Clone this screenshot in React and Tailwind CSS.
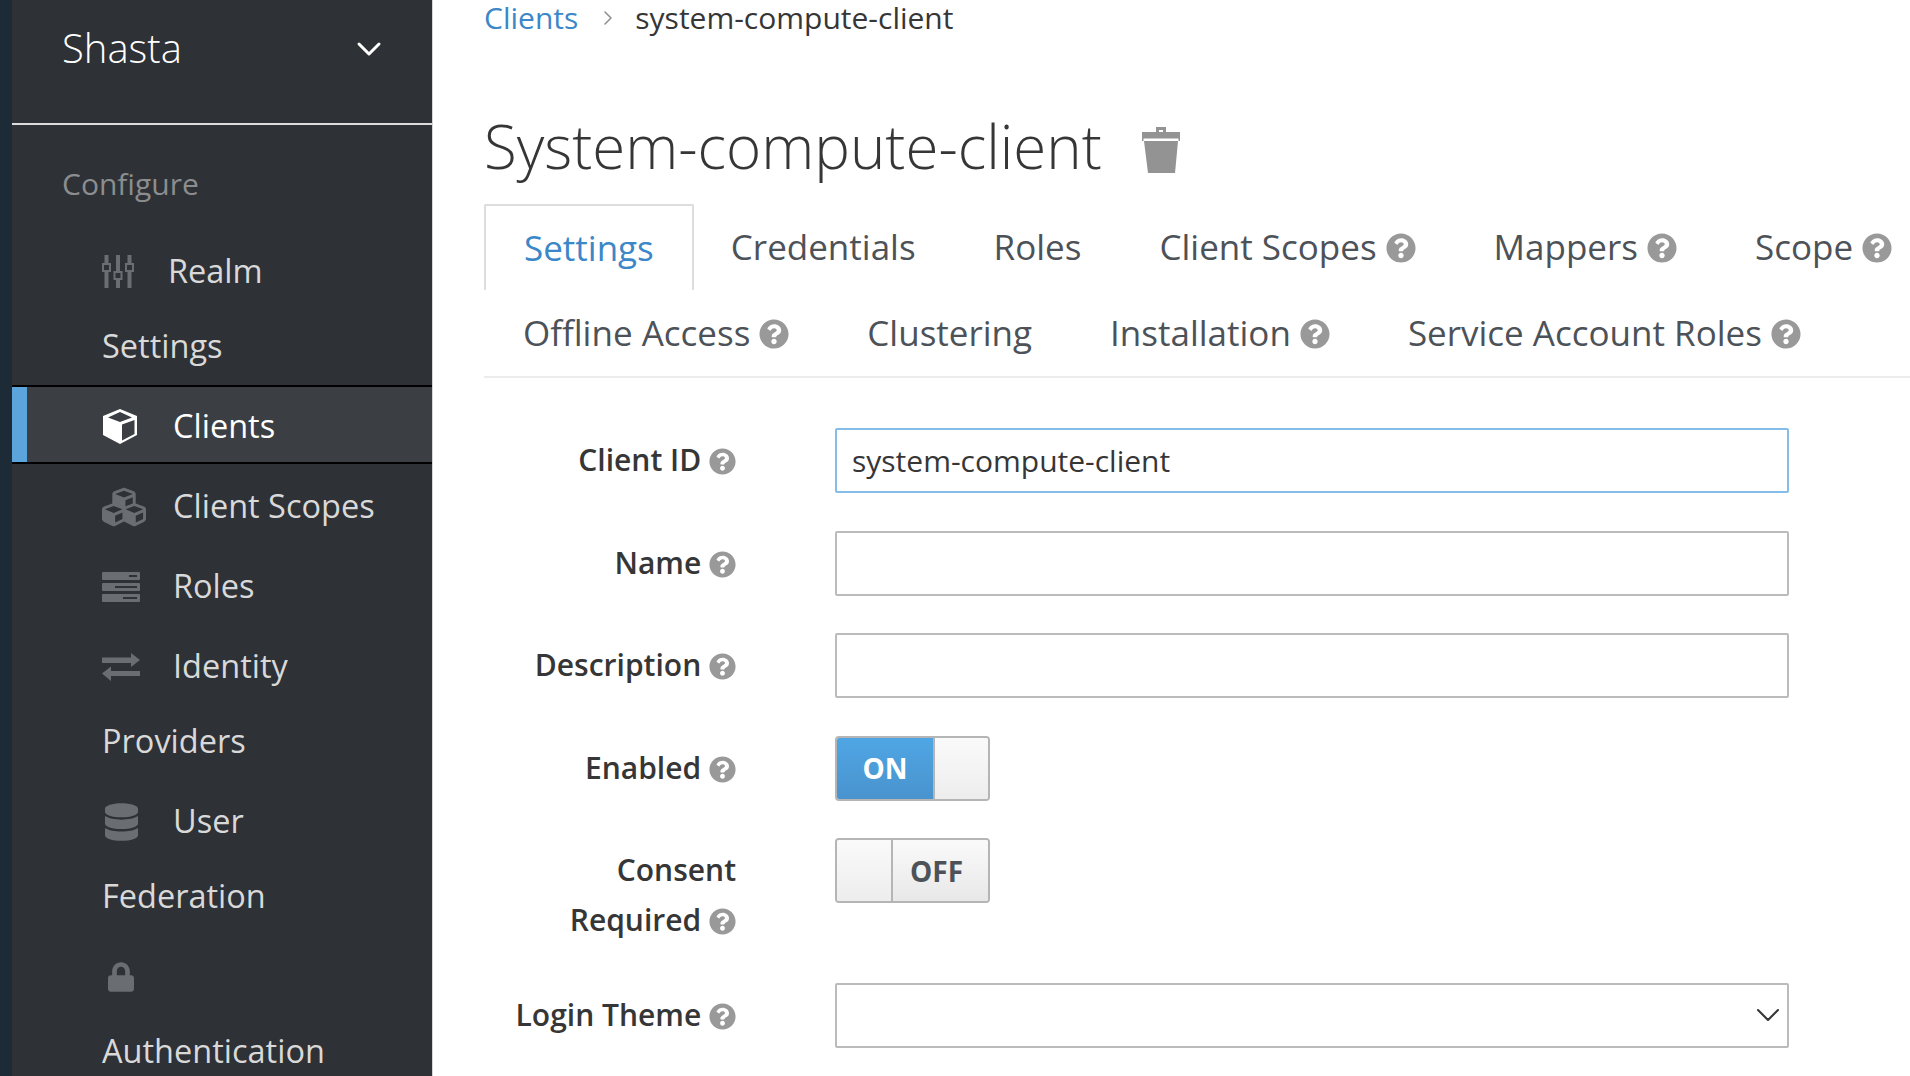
import React from 'react'
import { FaCubes, FaDatabase, FaLock, FaQuestionCircle } from 'react-icons/fa'
import { ChevronDown, ChevronRight } from 'lucide-react'

function SlidersIcon() {
  return (
    <svg viewBox="0 0 32 33" className="w-[32px] h-[33px]" fill="currentColor">
      <rect x="2.500" y="0" width="4" height="9" />
      <rect x="2.500" y="16" width="4" height="17" />
      <rect x="1" y="9" width="7" height="7" fill="none" stroke="currentColor" strokeWidth="2" />
      <rect x="14" y="0" width="4" height="17" />
      <rect x="14" y="24" width="4" height="9" />
      <rect x="12.500" y="17" width="7" height="7" fill="none" stroke="currentColor" strokeWidth="2" />
      <rect x="25.500" y="0" width="4" height="9" />
      <rect x="25.500" y="16" width="4" height="17" />
      <rect x="24" y="9" width="7" height="7" fill="none" stroke="currentColor" strokeWidth="2" />
    </svg>
  )
}

function CubeIcon() {
  return (
    <svg viewBox="0 0 36 36" className="w-[36px] h-[36px]" fill="#ffffff">
      <path
        fillRule="evenodd"
        d="M18 0L35 7V26L18 35L1 26V7ZM18 3L6 8.500L18 13L30 8.500ZM20 15.500V31.500L32.500 25V11Z"
      />
    </svg>
  )
}

function ServerIcon() {
  return (
    <svg viewBox="0 0 38 30" className="w-[38px] h-[30px]" fill="currentColor">
      <rect x="0" y="0" width="38" height="8" rx="1" />
      <rect x="0" y="11" width="38" height="8" rx="1" />
      <rect x="0" y="22" width="38" height="8" rx="1" />
      <rect x="27" y="3" width="8" height="2" fill="#2e3136" />
      <rect x="13" y="14" width="22" height="2" fill="#2e3136" />
      <rect x="21" y="25" width="14" height="2" fill="#2e3136" />
    </svg>
  )
}

function ExchangeIcon() {
  return (
    <svg viewBox="0 0 38 28" className="w-[38px] h-[28px]" fill="currentColor">
      <path d="M0 4.500H29V0L38 7L29 14V10H0Z" />
      <path d="M38 18H9V13.500L0 20.500L9 28V23H38Z" />
    </svg>
  )
}

function TrashIcon() {
  return (
    <svg viewBox="0 0 40 46" className="w-[40px] h-[46px]" fill="#939393">
      <path d="M15 0h10v5h-3V3h-4v2h-3z" />
      <path d="M1 5h38v9H37.500V11.500H2.500V14H1z" />
      <path d="M3 14h34v0l-3 32H7z" />
    </svg>
  )
}

function Help({ size }) {
  return <FaQuestionCircle className={`inline-block align-[-4px] text-[#999999] ${size}`} />
}

const navItems = [
  { icon: <SlidersIcon />, first: 'Realm', second: 'Settings', gap: 'w-[66px]' },
  { icon: <CubeIcon />, first: 'Clients', active: true, gap: 'w-[71px]' },
  { icon: <FaCubes className="w-[50px] h-[44px] -ml-[3px]" />, first: 'Client Scopes', gap: 'w-[71px]' },
  { icon: <ServerIcon />, first: 'Roles', gap: 'w-[71px]' },
  { icon: <ExchangeIcon />, first: 'Identity', second: 'Providers', gap: 'w-[71px]' },
  { icon: <FaDatabase className="w-[33px] h-[38px] ml-[3px]" />, first: 'User', second: 'Federation', gap: 'w-[71px]' },
  { icon: <FaLock className="w-[26px] h-[30px] ml-[6px]" />, first: '', second: 'Authentication', gap: 'w-[71px]' },
]

const tabs = [
  { label: 'Settings', active: true },
  { label: 'Credentials' },
  { label: 'Roles' },
  { label: 'Client Scopes', help: true },
  { label: 'Mappers', help: true },
  { label: 'Scope', help: true },
  { label: 'Offline Access', help: true },
  { label: 'Clustering' },
  { label: 'Installation', help: true },
  { label: 'Service Account Roles', help: true },
]

function NavItem({ item }) {
  if (item.active) {
    return (
      <div className="flex items-center h-[79px] -mt-[3px] mb-[4px] border-y-2 border-black bg-[#3b3e43] text-white">
        <div className="w-[15px] h-full bg-[#5ba4dc]" />
        <div className="flex items-center pl-[75px] pt-[4px]">
          <div className={`${item.gap} flex items-center shrink-0`}>{item.icon}</div>
          <span>{item.first}</span>
        </div>
      </div>
    )
  }
  return (
    <div className="pl-[90px] mb-[5px] text-[#d9d9d9]">
      <div className="flex items-center h-[75px] pt-[2px]">
        <div className={`${item.gap} flex items-center shrink-0 text-[#6a6e73]`}>{item.icon}</div>
        <span>{item.first}</span>
      </div>
      {item.second && <div className="h-[75px] leading-[75px]">{item.second}</div>}
    </div>
  )
}

function Sidebar() {
  return (
    <div className="flex shrink-0 h-full">
      <div className="w-[12px] bg-[#1c2b36]" />
      <div className="w-[420px] h-full bg-[#2e3136] border-r border-[#d6d6d6] box-content overflow-hidden text-[32.500px]">
        <div className="h-[125px] border-b-2 border-[#dcdcdc] pl-[50px] pr-[43px] pt-[20px] flex justify-between text-white">
          <span className="text-[40px] leading-[56px] font-light">Shasta</span>
          <ChevronDown className="w-[40px] h-[40px] mt-[9px]" strokeWidth={1.8} />
        </div>
        <div className="pl-[50px] pt-[41px] pb-[31px] text-[30px] leading-[36px] text-[#8b8d8f]">Configure</div>
        {navItems.map((item) => (
          <NavItem key={item.first + (item.second || '')} item={item} />
        ))}
      </div>
    </div>
  )
}

function FormRow({ label, children }) {
  return (
    <div className="flex items-start mb-[37.500px]">
      <label className="w-[252px] mr-[99px] shrink-0 text-right text-[30px] leading-[50px] font-semibold text-[#363636] pt-[7px]">
        {label} <Help size="w-[27px] h-[27px]" />
      </label>
      {children}
    </div>
  )
}

function TextBox({ value, focused }) {
  return (
    <div className={`w-[954px] h-[65px] border-2 rounded-[2px] bg-white pl-[15px] text-[30px] leading-[61px] text-[#363636] ${focused ? 'border-[#85bde8]' : 'border-[#bbbbbb]'}`}>
      {value}
    </div>
  )
}

function Toggle({ on }) {
  return (
    <div className="flex w-[155px] h-[65px] border-2 border-[#b5b5b5] rounded-[4px] overflow-hidden text-[28px] font-bold">
      {on ? (
        <>
          <div className="w-[96px] bg-gradient-to-b from-[#4fa6e4] to-[#4993ce] text-white flex items-center justify-center">ON</div>
          <div className="flex-1 border-l-2 border-[#b5b5b5] bg-gradient-to-b from-[#fafafa] to-[#ededed]" />
        </>
      ) : (
        <>
          <div className="w-[56px] border-r-2 border-[#b5b5b5] bg-gradient-to-b from-[#fafafa] to-[#ededed]" />
          <div className="flex-1 bg-gradient-to-b from-[#fafafa] to-[#e8e8e8] text-[#4d5258] flex items-center justify-center pr-[8px]">OFF</div>
        </>
      )}
    </div>
  )
}

export default function App() {
  return (
    <div className="flex h-[1076px] w-[1910px] overflow-hidden bg-white font-['Open_Sans',sans-serif]">
      <Sidebar />
      <div className="flex-1 min-w-0 overflow-hidden pl-[51px]">
        <div className="flex items-center h-[36px] text-[30px] leading-[36px] text-[#363636]">
          <span className="text-[#3b87c8]">Clients</span>
          <ChevronRight className="w-[24px] h-[24px] ml-[18px] mr-[15px] text-[#8b8d8f]" strokeWidth={1.5} />
          <span>system-compute-client</span>
        </div>
        <div className="flex items-center mt-[70px] h-[80px]">
          <h1 className="text-[60px] leading-[80px] font-light text-[#363636]">System-compute-client</h1>
          <div className="ml-[39px] mt-[8px]"><TrashIcon /></div>
        </div>
        <div className="flex flex-wrap w-[1460px] mt-[18px] border-b-2 border-[#ececec] text-[35px] text-[#4d5258]">
          {tabs.map((tab) => (
            <div
              key={tab.label}
              className={`flex items-center h-[86px] pt-[1px] whitespace-nowrap ${tab.active ? 'text-[#3b87c8] border-2 border-b-0 border-[#dddddd] px-[38px] -mr-[2px] rounded-t-[2px]' : 'px-[39px]'}`}
            >
              {tab.label}
              {tab.help && <Help size="w-[30px] h-[30px] ml-[9px] shrink-0" />}
            </div>
          ))}
        </div>
        <div className="mt-[50px]">
          <FormRow label="Client ID"><TextBox value="system-compute-client" focused /></FormRow>
          <FormRow label="Name"><TextBox /></FormRow>
          <FormRow label="Description"><TextBox /></FormRow>
          <FormRow label="Enabled"><Toggle on /></FormRow>
          <FormRow label="Consent Required"><Toggle /></FormRow>
          <FormRow label="Login Theme">
            <div className="flex items-center justify-end w-[954px] h-[65px] border-2 border-[#bbbbbb] rounded-[2px] text-[#363636]">
              <ChevronDown className="w-[40px] h-[40px] -mr-[1px]" strokeWidth={1.25} />
            </div>
          </FormRow>
        </div>
      </div>
    </div>
  )
}
